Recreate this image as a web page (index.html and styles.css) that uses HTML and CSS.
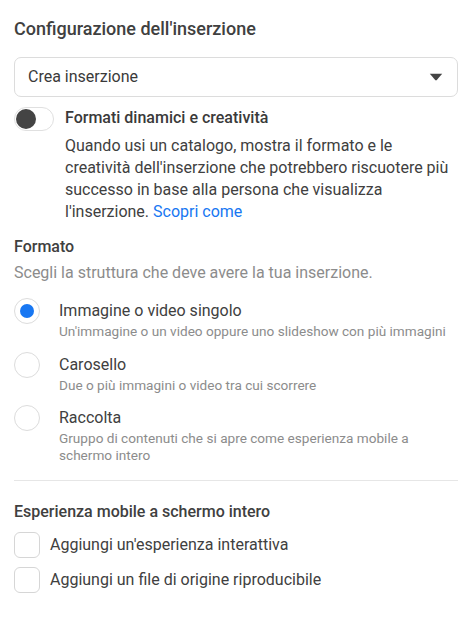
FILE: index.html
```html
<!DOCTYPE html>
<html lang="it">
<head>
<meta charset="utf-8">
<title>Configurazione dell'inserzione</title>
<link rel="stylesheet" href="styles.css">
</head>
<body>
<main class="panel">
  <h2 class="panel-title">Configurazione dell'inserzione</h2>

  <div class="select">
    <span class="select-value">Crea inserzione</span>
    <svg class="select-caret" width="14" height="8" viewBox="0 0 14 8"><path d="M0.8 0.8h12.4l-5.4 6.2q-0.8 0.8-1.6 0z" fill="#444"/></svg>
  </div>

  <div class="switch-row">
    <span class="switch"><span class="switch-knob"></span></span>
    <div class="switch-text">
      <div class="switch-label">Formati dinamici e creatività</div>
      <p class="switch-desc">Quando usi un catalogo, mostra il formato e le creatività dell'inserzione che potrebbero riscuotere più successo in base alla persona che visualizza l'inserzione. <a class="link" href="#">Scopri come</a></p>
    </div>
  </div>

  <section class="format">
    <h3 class="section-title">Formato</h3>
    <p class="section-hint">Scegli la struttura che deve avere la tua inserzione.</p>

    <ul class="radio-list">
      <li class="radio-item">
        <span class="radio radio-on"><span class="radio-dot"></span></span>
        <div class="radio-text">
          <div class="radio-label">Immagine o video singolo</div>
          <div class="radio-desc">Un'immagine o un video oppure uno slideshow con più immagini</div>
        </div>
      </li>
      <li class="radio-item">
        <span class="radio"></span>
        <div class="radio-text">
          <div class="radio-label">Carosello</div>
          <div class="radio-desc">Due o più immagini o video tra cui scorrere</div>
        </div>
      </li>
      <li class="radio-item">
        <span class="radio"></span>
        <div class="radio-text">
          <div class="radio-label">Raccolta</div>
          <div class="radio-desc">Gruppo di contenuti che si apre come esperienza mobile a schermo intero</div>
        </div>
      </li>
    </ul>
  </section>

  <hr class="divider">

  <section class="mobile">
    <h3 class="section-title">Esperienza mobile a schermo intero</h3>
    <ul class="check-list">
      <li class="check-item"><span class="checkbox"></span><span class="check-label">Aggiungi un'esperienza interattiva</span></li>
      <li class="check-item"><span class="checkbox"></span><span class="check-label">Aggiungi un file di origine riproducibile</span></li>
    </ul>
  </section>
</main>
</body>
</html>
```

FILE: styles.css
```css
* {
  box-sizing: border-box;
}

html, body {
  margin: 0;
  background: #fff;
}

body {
  font-family: Roboto, "Liberation Sans", Arial, sans-serif;
  color: #404040;
  font-size: 16px;
}

.panel {
  padding: 17px 14px 20px;
}

.panel-title {
  margin: 0;
  font-size: 18px;
  font-weight: 500;
  line-height: 24px;
  color: #404040;
}

/* dropdown */
.select {
  margin-top: 16px;
  height: 40px;
  border: 1px solid #dcdcdc;
  border-radius: 7px;
  display: flex;
  align-items: center;
  justify-content: space-between;
  padding: 0 14px 0 13px;
}

.select-value {
  line-height: 22px;
  color: #3a3a3a;
}

.select-caret {
  display: block;
}

/* toggle row */
.switch-row {
  display: flex;
  gap: 11px;
  margin-top: 10px;
}

.switch {
  flex: none;
  width: 40px;
  height: 24px;
  border: 1px solid #e0e0e0;
  border-radius: 12px;
  display: flex;
  align-items: center;
  padding-left: 1px;
}

.switch-knob {
  width: 20px;
  height: 20px;
  border-radius: 50%;
  background: #444;
}

.switch-text {
  width: 388px;
}

.switch-label {
  font-weight: 500;
  line-height: 22px;
  color: #3a3a3a;
}

.switch-desc {
  margin: 6px 0 0;
  line-height: 22px;
  color: #404040;
}

.link {
  color: #1877f2;
  text-decoration: none;
}

/* sections */
.format {
  margin-top: 13px;
}

.section-title {
  margin: 0;
  font-size: 16px;
  font-weight: 500;
  line-height: 22px;
  color: #404040;
}

.section-hint {
  margin: 4px 0 0;
  line-height: 22px;
  color: #8c8c8c;
}

.radio-list,
.check-list {
  list-style: none;
  margin: 0;
  padding: 0;
}

.radio-list {
  margin-top: 14px;
  display: flex;
  flex-direction: column;
  gap: 11.5px;
}

.radio-item {
  display: flex;
  gap: 19px;
}

.radio {
  flex: none;
  width: 26px;
  height: 26px;
  border: 1px solid #dcdcdc;
  border-radius: 50%;
  display: flex;
  align-items: center;
  justify-content: center;
}

.radio-dot {
  width: 14px;
  height: 14px;
  border-radius: 50%;
  background: #1877f2;
}

.radio-text {
  padding-top: 2px;
}

.radio-label {
  line-height: 22px;
  color: #404040;
}

.radio-desc {
  margin-top: 1px;
  font-size: 13.6px;
  line-height: 17px;
  color: #8c8c8c;
}

.divider {
  border: 0;
  border-top: 1px solid #e6e6e6;
  margin: 16px 0 0;
}

.mobile {
  margin-top: 20px;
}

.check-list {
  margin-top: 9px;
  display: flex;
  flex-direction: column;
  gap: 9px;
}

.check-item {
  display: flex;
  align-items: center;
  gap: 10px;
}

.checkbox {
  flex: none;
  width: 26px;
  height: 26px;
  border: 1px solid #d6d6d6;
  border-radius: 6px;
}

.check-label {
  line-height: 22px;
  color: #404040;
}
```
